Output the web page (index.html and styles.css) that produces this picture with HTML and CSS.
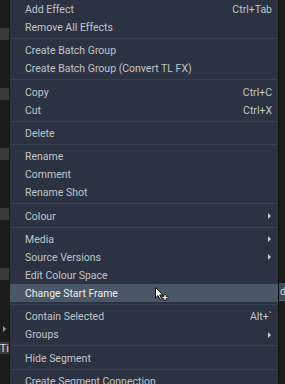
FILE: index.html
```html
<!DOCTYPE html>
<html lang="en">
  <head>
    <meta charset="UTF-8" />
    <title>Timeline context menu</title>
    <link rel="stylesheet" href="styles.css">
  </head>
  <body>
    <div class="timeline">
      <div class="track-heads">
        <div class="track-bar"></div>
        <div class="track-bar"></div>
        <div class="track-bar"></div>
        <div class="track-bar"></div>
        <div class="track-bar"></div>
        <div class="track-toggle"></div>
        <div class="track-bar track-named"><span>r Ti</span></div>
      </div>

      <div class="context-menu">
        <div class="menu-item"><span>Add Effect</span><span class="shortcut">Ctrl+Tab</span></div>
        <div class="menu-item"><span>Remove All Effects</span></div>
        <div class="menu-sep"></div>
        <div class="menu-item"><span>Create Batch Group</span></div>
        <div class="menu-item"><span>Create Batch Group (Convert TL FX)</span></div>
        <div class="menu-sep"></div>
        <div class="menu-item"><span>Copy</span><span class="shortcut">Ctrl+C</span></div>
        <div class="menu-item"><span>Cut</span><span class="shortcut">Ctrl+X</span></div>
        <div class="menu-sep"></div>
        <div class="menu-item"><span>Delete</span></div>
        <div class="menu-sep"></div>
        <div class="menu-item"><span>Rename</span></div>
        <div class="menu-item"><span>Comment</span></div>
        <div class="menu-item"><span>Rename Shot</span></div>
        <div class="menu-sep"></div>
        <div class="menu-item"><span>Colour</span><span class="submenu-arrow"></span></div>
        <div class="menu-sep"></div>
        <div class="menu-item"><span>Media</span><span class="submenu-arrow"></span></div>
        <div class="menu-item"><span>Source Versions</span><span class="submenu-arrow"></span></div>
        <div class="menu-item"><span>Edit Colour Space</span></div>
        <div class="menu-item is-hover">
          <span>Change Start Frame</span>
          <!-- pointer with the move badge -->
          <svg class="cursor" width="16" height="16" viewBox="0 0 16 16">
            <path d="M1.5 0.5 L1.5 11 L4 8.6 L6 12.5 L7.6 11.7 L5.8 8 L9 8 Z" fill="#f4f4f4" stroke="#111" stroke-width="1" stroke-linejoin="round" />
            <path d="M10 7.5 h2 v2 h2 v2 h-2 v2 h-2 v-2 h-2 v-2 h2 z" fill="#f4f4f4" stroke="#111" stroke-width="0.8" />
          </svg>
        </div>
        <div class="menu-sep"></div>
        <div class="menu-item"><span>Contain Selected</span><span class="shortcut">Alt+`</span></div>
        <div class="menu-item"><span>Groups</span><span class="submenu-arrow"></span></div>
        <div class="menu-sep"></div>
        <div class="menu-item"><span>Hide Segment</span></div>
        <div class="menu-sep"></div>
        <div class="menu-item"><span>Create Segment Connection</span></div>
      </div>

      <div class="track-tail">
        <div class="tail-clip"><span>d</span></div>
      </div>
    </div>
  </body>
</html>
```
FILE: styles.css
```css
:root {
  --tl-dark: #1c1c1d;
  --tl-bar: #3a3a3b;
  --menu-bg: #2b3342;
  --menu-line: #36404f;
  --menu-hover: #4a5767;
  --menu-text: #c0c4c9;
  --menu-text-hover: #e9ecef;
}

* {
  margin: 0;
  padding: 0;
  box-sizing: border-box;
}

body {
  background: var(--tl-dark);
  font-family: Roboto, "DejaVu Sans", sans-serif;
  font-size: 10.5px;
  overflow: hidden;
}

.timeline {
  display: flex;
  height: 384px;
}

/* timeline behind the menu */
.track-heads {
  width: 9px;
  flex-shrink: 0;
  display: flex;
  flex-direction: column;
  padding-top: 28px;
  gap: 48px;
}

.track-bar {
  height: 12px;
  background: var(--tl-bar);
}

.track-toggle {
  margin-top: -2px;
  margin-left: 3px;
  width: 0;
  height: 0;
  border-top: 3px solid transparent;
  border-bottom: 3px solid transparent;
  border-left: 3px solid #9a9a9a;
}

.track-named {
  margin-top: -38px;
  overflow: hidden;
  display: flex;
  justify-content: flex-end;
  align-items: center;
  color: #d8d8d8;
  white-space: nowrap;
  font-size: 11px;
}

.track-tail {
  flex: 1;
  border-left: 1px solid #121212;
  display: flex;
  flex-direction: column;
  padding-top: 283px;
}

.tail-clip {
  height: 18px;
  background: #3d4a58;
  border-bottom: 1px solid #5a6673;
  color: #d0d4d8;
  display: flex;
  align-items: center;
  padding-left: 1px;
  overflow: hidden;
}

/* context menu */
.context-menu {
  width: 269px;
  flex-shrink: 0;
  background: var(--menu-bg);
  border-left: 1px solid #151a21;
  color: var(--menu-text);
}

.menu-item {
  height: 18px;
  display: flex;
  align-items: center;
  justify-content: space-between;
  padding: 1px 6px 0 15px;
  white-space: nowrap;
  position: relative;
}

.menu-item.is-hover {
  background: var(--menu-hover);
  color: var(--menu-text-hover);
}

.menu-sep {
  height: calc(16px / 3);
  display: flex;
  align-items: center;
}

.menu-sep::after {
  content: "";
  flex: 1;
  height: 1px;
  background: var(--menu-line);
}

.shortcut {
  color: var(--menu-text);
}

.submenu-arrow {
  width: 0;
  height: 0;
  margin-right: 1px;
  border-top: 3px solid transparent;
  border-bottom: 3px solid transparent;
  border-left: 3px solid #c9cdd2;
}

.cursor {
  position: absolute;
  left: 144px;
  top: 3px;
}
```
